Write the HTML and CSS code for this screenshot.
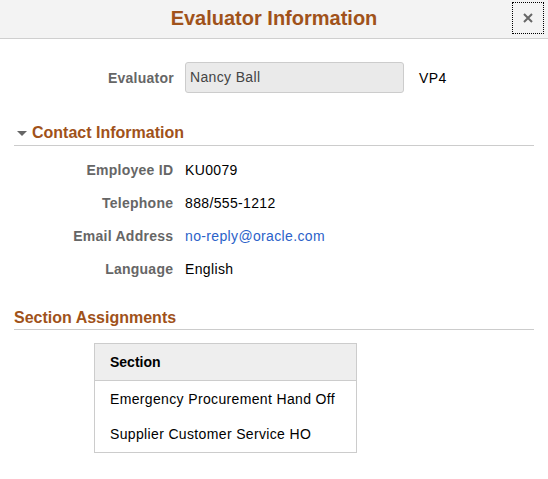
FILE: index.html
```html
<!DOCTYPE html>
<html>
<head>
<meta charset="utf-8">
<link rel="stylesheet" href="styles.css">
</head>
<body>
<div class="header">
  <h1 class="title">Evaluator Information</h1>
  <button class="close" aria-label="Close">
    <svg width="10" height="10" viewBox="0 0 10 10"><path d="M1 1L9 9M9 1L1 9" stroke="#666" stroke-width="2"/></svg>
  </button>
</div>
<div class="content">
  <div class="evaluator-row">
    <span class="label">Evaluator</span>
    <div class="input">Nancy Ball</div>
    <span class="code">VP4</span>
  </div>

  <div class="group-head collapsible">
    <span class="tri"></span><span>Contact Information</span>
  </div>
  <div class="fields">
    <span class="label">Employee ID</span><span class="value">KU0079</span>
    <span class="label">Telephone</span><span class="value">888/555-1212</span>
    <span class="label">Email Address</span><a class="value link" href="#">no-reply@oracle.com</a>
    <span class="label">Language</span><span class="value">English</span>
  </div>

  <div class="group-head">
    <span>Section Assignments</span>
  </div>
  <table class="grid">
    <thead><tr><th>Section</th></tr></thead>
    <tbody>
      <tr><td>Emergency Procurement Hand Off</td></tr>
      <tr><td>Supplier Customer Service HO</td></tr>
    </tbody>
  </table>
</div>
</body>
</html>
```
FILE: styles.css
```css
* { box-sizing: border-box; }
body {
  margin: 0;
  font-family: "Liberation Sans", Arial, sans-serif;
  font-size: 14px;
  color: #000;
  background: #fff;
}
.header {
  position: relative;
  height: 39px;
  background: #f3f3f3;
  border-bottom: 1px solid #cfcfcf;
  display: flex;
  align-items: center;
  justify-content: center;
}
.title {
  margin: 0 0 2px;
  font-size: 20px;
  font-weight: bold;
  color: #a0521a;
  line-height: 36px;
}
.close {
  position: absolute;
  left: 512px;
  top: 2px;
  width: 32px;
  height: 32px;
  padding: 0;
  border: 1px dotted #000;
  background: transparent;
  display: flex;
  align-items: center;
  justify-content: center;
}
.content {
  padding: 0 14px;
}
.label {
  font-weight: bold;
  color: #666;
  text-align: right;
  letter-spacing: 0.25px;
  margin-right: -0.25px;
}
.value, .input, .code, .grid td {
  letter-spacing: 0.35px;
}
.evaluator-row {
  display: flex;
  align-items: center;
  margin-top: 23px;
}
.evaluator-row .label {
  width: 160px;
  margin-right: 11px;
}
.input {
  width: 219px;
  height: 31px;
  background: #eaeaea;
  border: 1px solid #ccc;
  border-radius: 3px;
  padding-left: 4px;
  line-height: 29px;
  color: #444;
}
.code {
  margin-left: 15px;
}
.group-head {
  display: flex;
  align-items: center;
  font-size: 16px;
  font-weight: bold;
  color: #a0521a;
  border-bottom: 1px solid #ccc;
  height: 25px;
}
.collapsible { margin-top: 28px; }
.tri {
  width: 0;
  height: 0;
  border-left: 5px solid transparent;
  border-right: 5px solid transparent;
  border-top: 5px solid #666;
  margin: 0 5px 0 3px;
}
.fields {
  display: grid;
  grid-template-columns: 159px auto;
  column-gap: 12px;
  row-gap: 17px;
  margin-top: 16px;
  line-height: 16px;
}
.value { color: #000; text-decoration: none; }
.link { color: #2b62c9; }
.fields + .group-head { margin-top: 28px; padding-top: 1px; }
.grid {
  margin: 13px 0 0 80px;
  border-collapse: collapse;
  width: 263px;
  border: 1px solid #ccc;
}
.grid th {
  background: #eeeeee;
  text-align: left;
  font-weight: bold;
  height: 37px;
  padding: 0 15px;
  border-bottom: 1px solid #ccc;
}
.grid td {
  padding: 0 15px;
  height: 36px;
}
```
